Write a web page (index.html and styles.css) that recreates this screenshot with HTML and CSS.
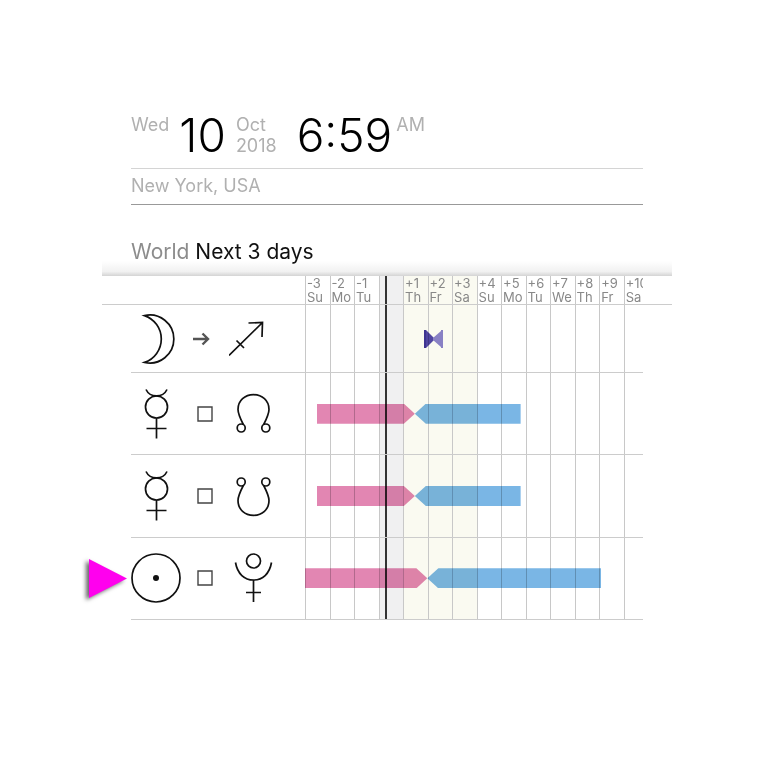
FILE: index.html
```
<!DOCTYPE html>
<html lang="en">
<head>
<meta charset="utf-8">
<meta name="viewport" content="width=device-width, initial-scale=1">
<title>World transits</title>
<link rel="stylesheet" href="styles.css">
</head>
<body>
<svg class="defs" aria-hidden="true">
  <symbol id="moon" viewBox="0 0 50 50"><path d="M13.500 1.6A24 24 0 1 1 13.500 48.4A24.7 24.7 0 0 0 13.500 1.6Z"/></symbol>
  <symbol id="sagittarius" viewBox="0 0 50 50"><path d="M0 41.5 33.5 8.5M19.5 9 33.5 8.5 33 23M7.5 26.5 15 34"/></symbol>
  <symbol id="mercury" viewBox="0 0 50 50"><circle cx="25.5" cy="18" r="11"/><path d="M15 .5C19 9 32 9 36 .5M25.5 29V49.5M15.500 39.500H35.500"/></symbol>
  <symbol id="node" viewBox="0 0 50 50"><circle cx="12.200" cy="39" r="4"/><circle cx="36.800" cy="39" r="4"/><path d="M14.300 35.500C11 29 9 25 9 20.500C9 11.500 16 5.700 24.500 5.700S40 11.500 40 20.500C40 25 38 29 34.700 35.500"/></symbol>
  <symbol id="sun" viewBox="0 0 50 50"><circle cx="25" cy="25" r="24"/><circle class="dot" cx="25" cy="25" r="3"/></symbol>
  <symbol id="pluto" viewBox="0 0 50 50"><circle cx="24.500" cy="8" r="7"/><path d="M6.500 9.500C8.500 21 15.500 27 24.500 27S40.500 21 42.500 9.500M24.500 27V49M17 39.500H32"/></symbol>
  <symbol id="square" viewBox="0 0 20 20"><path d="M3 3H17V17H3Z"/></symbol>
  <symbol id="ingress" viewBox="0 0 20 20"><path d="M2 10H17M11.500 4.500 17 10 11.500 15.500"/></symbol>
</svg>

<main class="page">
  <header class="moment">
    <div class="date">
      <span class="small">Wed</span>
      <span class="big day">10</span>
      <span class="small month">Oct<br>2018</span>
      <span class="big time">6:59</span>
      <span class="small">AM</span>
    </div>
    <div class="place">New York, USA</div>
  </header>

  <section class="transits">
    <h1 class="title"><span>World</span> Next 3 days</h1>
    <div class="chart">
      <div class="days">
        <div class="day-col"></div><div class="day-col"></div><div class="day-col"></div>
        <div class="day-col today"></div>
        <div class="day-col soon"></div><div class="day-col soon"></div><div class="day-col soon"></div>
        <div class="day-col"></div><div class="day-col"></div><div class="day-col"></div><div class="day-col"></div>
        <div class="day-col"></div><div class="day-col"></div><div class="day-col"></div>
        <div class="now"></div>
      </div>

      <div class="head">
        <div class="labels">
          <span>-3<br>Su</span><span>-2<br>Mo</span><span>-1<br>Tu</span><span></span>
          <span>+1<br>Th</span><span>+2<br>Fr</span><span>+3<br>Sa</span><span>+4<br>Su</span><span>+5<br>Mo</span>
          <span>+6<br>Tu</span><span>+7<br>We</span><span>+8<br>Th</span><span>+9<br>Fr</span><span>+10<br>Sa</span>
        </div>
      </div>

      <div class="row">
        <div class="glyphs">
          <svg class="glyph"><use href="#moon"/></svg>
          <svg class="aspect ingress"><use href="#ingress"/></svg>
          <svg class="glyph"><use href="#sagittarius"/></svg>
        </div>
        <div class="plot">
          <svg class="event" style="margin-left:35.2%" viewBox="0 0 20 18">
            <path class="event-in" d="M0 0H2L10 8V10L2 18H0Z"/>
            <path class="event-out" d="M9 8 17 1V0H19V18H17V17L9 10Z"/>
            <path class="event-start" d="M0 0H2V18H0Z"/>
          </svg>
        </div>
      </div>

      <div class="row">
        <div class="glyphs">
          <svg class="glyph"><use href="#mercury"/></svg>
          <svg class="aspect"><use href="#square"/></svg>
          <svg class="glyph"><use href="#node"/></svg>
        </div>
        <div class="plot">
          <div class="bar applying" style="margin-left:3.5%;width:29%"></div>
          <div class="bar separating" style="width:31.3%"></div>
        </div>
      </div>

      <div class="row">
        <div class="glyphs">
          <svg class="glyph"><use href="#mercury"/></svg>
          <svg class="aspect"><use href="#square"/></svg>
          <svg class="glyph south"><use href="#node"/></svg>
        </div>
        <div class="plot">
          <div class="bar applying" style="margin-left:3.5%;width:29%"></div>
          <div class="bar separating" style="width:31.3%"></div>
        </div>
      </div>

      <div class="row">
        <svg class="pointer" viewBox="0 0 38 40"><path d="M0 0 38 19.500 0 39Z"/></svg>
        <div class="glyphs">
          <svg class="glyph"><use href="#sun"/></svg>
          <svg class="aspect"><use href="#square"/></svg>
          <svg class="glyph"><use href="#pluto"/></svg>
        </div>
        <div class="plot">
          <div class="bar applying" style="width:36.2%"></div>
          <div class="bar separating" style="width:51.5%"></div>
        </div>
      </div>
    </div>
  </section>
</main>
</body>
</html>
```
FILE: styles.css
```
* { box-sizing: border-box; }

body {
  margin: 0;
  background: #fff;
  color: #111;
  font-family: Inter, "Liberation Sans", sans-serif;
}

.defs { display: none; }

.page { padding: 111px 88px 40px 102px; }

.moment { margin: 0 29px; color: #b0b0b0; font-size: 18px; }

.date {
  display: flex;
  align-items: flex-start;
  height: 58px;
  border-bottom: 1px solid #d4d4d4;
}

.small { line-height: 21px; padding-top: 3px; }
.month { margin-right: 20px; }

.big {
  color: #000;
  font-size: 46px;
  font-weight: 300;
  line-height: 48px;
}
.day { margin: 0 10px; }
.time { margin-right: 4px; }

.place {
  height: 36px;
  line-height: 34px;
  border-bottom: 1px solid #999;
}

.title {
  margin: 0;
  height: 71px;
  padding: 33px 29px 0;
  font-size: 21px;
  font-weight: 400;
  line-height: 28px;
  background: linear-gradient(#fff0, #f1f1f1 70%, #d4d4d4) bottom / 100% 15px no-repeat;
}
.title span { color: #8c8c8c; }

.chart {
  display: grid;
  grid-template-columns: 29px 174px 1fr 29px;
  grid-template-rows: 29px 68px repeat(3, 1fr);
  min-height: 344px;
}

.days, .labels {
  display: grid;
  grid-template-columns: repeat(13, 100fr) 79fr;
}

.days { grid-column: 3; grid-row: 1 / -1; position: relative; }
.day-col { border-left: 1px solid #c8c8c8; }
.today { background: #f0f0f1; }
.soon { background: #fafaf1; }

.now {
  position: absolute;
  top: 0;
  bottom: 0;
  left: 23.6%;
  width: 2px;
  background: #333;
}

.head {
  position: relative;
  grid-column: 1 / -1;
  grid-row: 1;
  display: grid;
  grid-template-columns: subgrid;
  border-bottom: 1px solid #ccc;
}
.labels {
  grid-column: 3;
  overflow: hidden;
  color: #888;
  font-size: 13px;
  line-height: 14px;
}
.labels span { padding-left: 2px; min-width: 0; white-space: nowrap; }

.row {
  position: relative;
  grid-column: 2 / 4;
  display: grid;
  grid-template-columns: subgrid;
  align-items: center;
  border-bottom: 1px solid #ccc;
}
.row:nth-child(3) { grid-row: 2; }
.row:nth-child(4) { grid-row: 3; }
.row:nth-child(5) { grid-row: 4; }
.row:nth-child(6) { grid-row: 5; }

.glyphs {
  display: grid;
  grid-template-columns: repeat(3, 49px);
  align-items: center;
  justify-items: center;
}
.glyph {
  width: 50px;
  height: 50px;
  fill: none;
  stroke: #111;
  stroke-width: 1.7;
}
.south { transform: scaleY(-1); }
.dot { fill: #111; stroke: none; }
.aspect {
  width: 20px;
  height: 20px;
  fill: none;
  stroke: #444;
  stroke-width: 1.4;
}
.ingress { margin-right: 8px; stroke: #555; stroke-width: 2.4; }

.plot { display: flex; mix-blend-mode: multiply; }
.bar { height: 20px; }
.applying {
  background: #e286b2;
  clip-path: polygon(0 0, calc(100% - 11px) 0, 100% 50%, calc(100% - 11px) 100%, 0 100%);
}
.separating {
  background: #7ab6e5;
  clip-path: polygon(0 50%, 11px 0, 100% 0, 100% 100%, 11px 100%);
}
.event { width: 20px; height: 18px; }
.event-in { fill: #5146ab; }
.event-start { fill: #3f3499; }
.event-out { fill: #8b83d0; }

.pointer {
  position: absolute;
  top: 50%;
  left: -42px;
  width: 38px;
  height: 40px;
  margin-top: -19px;
  overflow: visible;
  fill: #f0e;
  filter: drop-shadow(-3px 2px 2px #0009);
}
```
